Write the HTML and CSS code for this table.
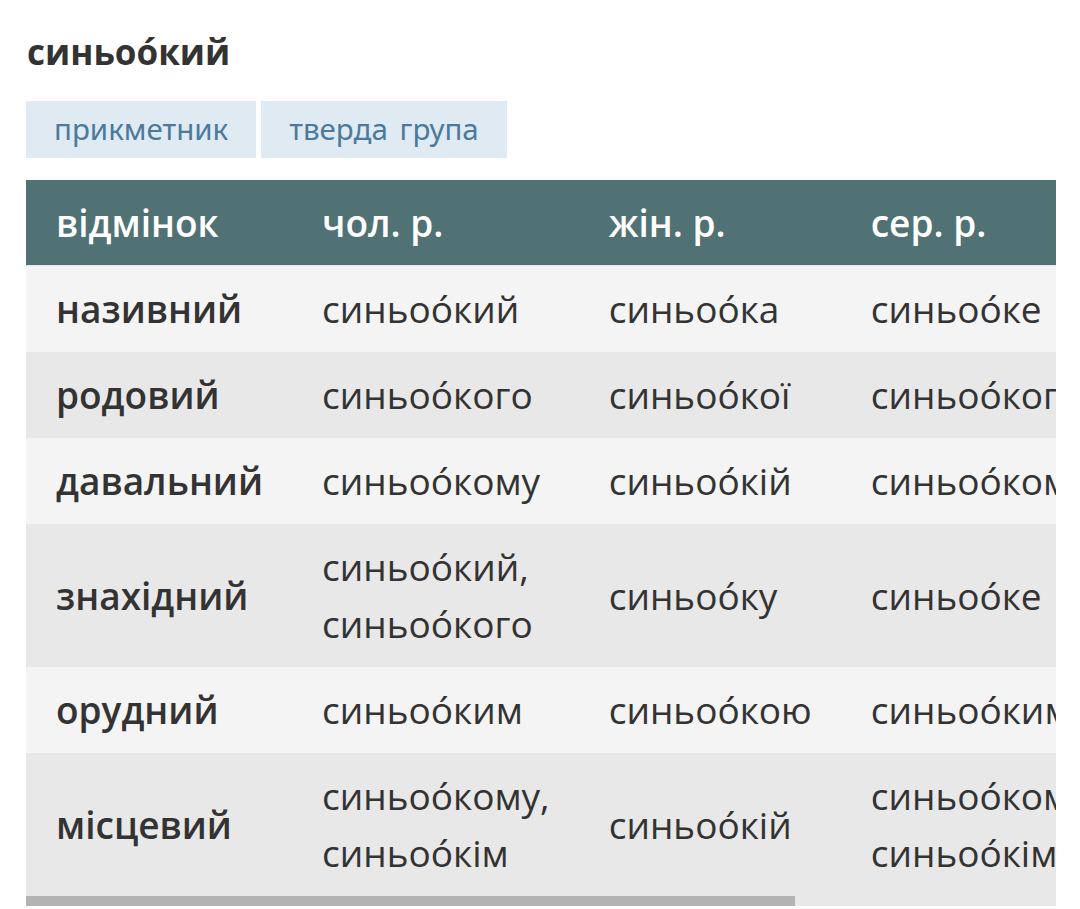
FILE: index.html
```html
<!DOCTYPE html>
<html lang="uk">
<head>
<meta charset="utf-8">
<title>синьоо́кий</title>
<link rel="stylesheet" href="styles.css">
</head>
<body>
<main class="page">
  <h1 class="word">синьоо́кий</h1>
  <div class="tags">
    <span class="tag">прикметник</span>
    <span class="tag">тверда група</span>
  </div>
  <div class="table-wrap">
    <table class="decl">
      <thead>
        <tr>
          <th>відмінок</th>
          <th>чол. р.</th>
          <th>жін. р.</th>
          <th>сер. р.</th>
          <th>множина</th>
        </tr>
      </thead>
      <tbody>
        <tr>
          <td class="case">називний</td>
          <td>синьоо́кий</td>
          <td>синьоо́ка</td>
          <td>синьоо́ке</td>
          <td>синьоо́кі</td>
        </tr>
        <tr>
          <td class="case">родовий</td>
          <td>синьоо́кого</td>
          <td>синьоо́кої</td>
          <td>синьоо́кого</td>
          <td>синьоо́ких</td>
        </tr>
        <tr>
          <td class="case">давальний</td>
          <td>синьоо́кому</td>
          <td>синьоо́кій</td>
          <td>синьоо́кому</td>
          <td>синьоо́ким</td>
        </tr>
        <tr>
          <td class="case">знахідний</td>
          <td>синьоо́кий,<br>синьоо́кого</td>
          <td>синьоо́ку</td>
          <td>синьоо́ке</td>
          <td>синьоо́кі,<br>синьоо́ких</td>
        </tr>
        <tr>
          <td class="case">орудний</td>
          <td>синьоо́ким</td>
          <td>синьоо́кою</td>
          <td>синьоо́ким</td>
          <td>синьоо́кими</td>
        </tr>
        <tr>
          <td class="case">місцевий</td>
          <td>синьоо́кому,<br>синьоо́кім</td>
          <td>синьоо́кій</td>
          <td>синьоо́кому,<br>синьоо́кім</td>
          <td>синьоо́ких</td>
        </tr>
      </tbody>
    </table>
  </div>
  <div class="scrollbar"><div class="scrollbar-thumb"></div></div>
</main>
</body>
</html>
```
FILE: styles.css
```css
html, body {
  margin: 0;
  padding: 0;
  background: #ffffff;
}

body {
  font-family: "Open Sans", "Noto Sans", sans-serif;
  color: #333333;
}

.page {
  padding: 24px 24px 0 26px;
}

.word {
  margin: 0;
  font-size: 35px;
  line-height: 56px;
  font-weight: 700;
  color: #333333;
  padding-left: 1px;
}

.tags {
  display: flex;
  gap: 5px;
  margin-top: 21px;
}

.tag {
  display: block;
  background: #dfeaf3;
  color: #4b7a9c;
  font-family: "Noto Sans", "Open Sans", sans-serif;
  font-size: 29.5px;
  line-height: 55px;
  padding: 0 28px 2px 28px;
  word-spacing: 4px;
}

.table-wrap {
  margin-top: 22px;
  width: 1030px;
  overflow: hidden;
}

.scrollbar {
  width: 1030px;
  height: 10px;
  background: #e8e8e8;
}

.scrollbar-thumb {
  width: 769px;
  height: 10px;
  background: #b3b3b3;
}

.decl {
  border-collapse: collapse;
  font-size: 37px;
  line-height: 57px;
  white-space: nowrap;
}

.decl th,
.decl td {
  text-align: left;
  vertical-align: middle;
  padding: 14px 29px 15px 30px;
}

.decl thead th {
  background: #507275;
  color: #ffffff;
  font-weight: 600;
  padding-top: 14px;
  padding-bottom: 14px;
  border-bottom: 1px solid #dcebec;
}

.decl tbody tr:nth-child(odd) {
  background: #f4f4f4;
}

.decl tbody tr:nth-child(even) {
  background: #e8e8e8;
}

.decl td {
  font-weight: 400;
  color: #333333;
}

.decl td.case {
  font-weight: 600;
}
```
